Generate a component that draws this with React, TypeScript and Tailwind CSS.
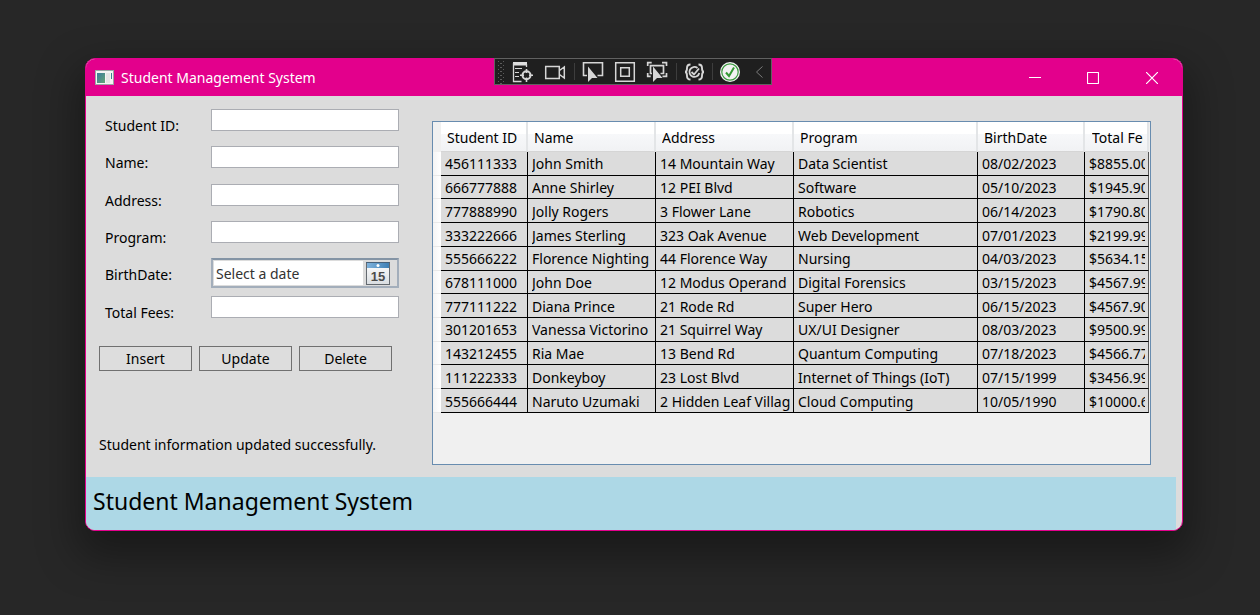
import React from "react";

const columns = ["Student ID", "Name", "Address", "Program", "BirthDate", "Total Fees"];

const students = [
  ["456111333", "John Smith", "14 Mountain Way", "Data Scientist", "08/02/2023", "$8855.00"],
  ["666777888", "Anne Shirley", "12 PEI Blvd", "Software", "05/10/2023", "$1945.90"],
  ["777888990", "Jolly Rogers", "3 Flower Lane", "Robotics", "06/14/2023", "$1790.80"],
  ["333222666", "James Sterling", "323 Oak Avenue", "Web Development", "07/01/2023", "$2199.99"],
  ["555666222", "Florence Nighting", "44 Florence Way", "Nursing", "04/03/2023", "$5634.15"],
  ["678111000", "John Doe", "12 Modus Operand", "Digital Forensics", "03/15/2023", "$4567.99"],
  ["777111222", "Diana Prince", "21 Rode Rd", "Super Hero", "06/15/2023", "$4567.90"],
  ["301201653", "Vanessa Victorino", "21 Squirrel Way", "UX/UI Designer", "08/03/2023", "$9500.99"],
  ["143212455", "Ria Mae", "13 Bend Rd", "Quantum Computing", "07/18/2023", "$4566.77"],
  ["111222333", "Donkeyboy", "23 Lost Blvd", "Internet of Things (IoT)", "07/15/1999", "$3456.99"],
  ["555666444", "Naruto Uzumaki", "2 Hidden Leaf Village", "Cloud Computing", "10/05/1990", "$10000.60"],
];

function DebugToolbar() {
  return (
    <div
      role="toolbar"
      aria-label="Debug tools"
      className="absolute top-0 left-[409px] flex h-[27px] w-[278px] items-center border border-[#616161] bg-[#1f1f1f]"
    >
      <svg width="276" height="25" viewBox="495 59 276 25" fill="none" stroke="#d6d6d6">
        <g fill="#5c5c5c" stroke="none">
          {[61, 65, 69, 73, 77, 81].map((y) => (
            <g key={y}>
              <rect x="498" y={y} width="1" height="1" />
              <rect x="503" y={y} width="1" height="1" />
              <rect x="500" y={y + 2} width="2" height="1" />
            </g>
          ))}
        </g>
        <path d="M513 62h14v3.500h-14z" fill="#dedede" stroke="none" />
        <path d="M513.500 63v18.500h8M526.500 64v3" strokeWidth="1.300" />
        <path d="M515 68.500h7M515 72.500h4M515 76.500h4" />
        <circle cx="526.500" cy="75.300" r="4" strokeWidth="2" />
        <path d="M526.500 69v4M526.500 77.500v4.500M520 75.300h4M529 75.300h4" strokeWidth="1.600" />
        <path d="M545.700 66.500h13.600v12h-13.600zM559.500 70.500l4.800-3.500v11l-4.800-3.500" strokeWidth="1.500" />
        <path d="M574.500 63v17M676.500 63v17M712.500 63v17" stroke="#3d3d3d" />
        <path d="M587 75.500h-3.500v-12.800h19v12.800h-5" strokeWidth="1.600" />
        <path d="M588 66.500v15.500l4-4h5.500z" fill="#d6d6d6" stroke="none" />
        <path d="M615.700 62.700h18.600v18.600h-18.600zM620.700 67.700h8.600v8.600h-8.600z" strokeWidth="1.500" />
        <path d="M647.700 66v-3.300h4M662 62.700h4.500v3.300M647.700 73v3.300h3M666.500 73v3.300h-4M652 73.500h-1.500v-7.800h13v7.800h-3" strokeWidth="1.700" />
        <path d="M653 66.500v15.500l4-4h5.500z" fill="#d6d6d6" stroke="none" />
        <path d="M690.500 64.500c-3 0-3.500 1.500-3.500 3.500s-.500 4-2 4c1.500 0 2 2 2 4s.500 3.500 3.500 3.500M698.500 64.500c3 0 3.500 1.500 3.500 3.500s.500 4 2 4c-1.500 0-2 2-2 4s-.500 3.500-3.500 3.500" strokeWidth="1.900" />
        <path d="M697.500 68a5 5 0 1 0 1.800 5M691.500 72l2.500 2.500 5-6" strokeWidth="1.800" />
        <circle cx="730" cy="72" r="10" fill="#f2f2f2" stroke="none" />
        <circle cx="730" cy="72" r="8.200" stroke="#3a9a3e" strokeWidth="1.200" />
        <path d="M726 72.500l3 3.500 5-8.500" stroke="#339933" strokeWidth="2" />
        <path d="M762.500 66.500l-6 5.500 6 5.500" stroke="#7a7a7a" />
      </svg>
    </div>
  );
}

function WindowIcon() {
  return (
    <svg width="19" height="16" viewBox="0 0 19 16">
      <defs>
        <linearGradient id="pane" x1="0" y1="0" x2="1" y2="1">
          <stop offset="0" stopColor="#3b7a9e" />
          <stop offset="1" stopColor="#63a574" />
        </linearGradient>
      </defs>
      <rect x="0.500" y="0.500" width="18" height="14" fill="#f4f4f4" stroke="#9aa7a5" />
      <rect x="2" y="3" width="8" height="10" fill="url(#pane)" />
      <rect x="11" y="3" width="4" height="10" fill="#e5e5e5" />
      <rect x="16" y="3" width="1" height="6" fill="#3b8290" />
    </svg>
  );
}

function CalendarIcon() {
  return (
    <svg width="24" height="23" viewBox="0 0 24 23">
      <defs>
        <linearGradient id="page" x1="0" y1="0" x2="0" y2="1">
          <stop offset="0" stopColor="#ffffff" />
          <stop offset="1" stopColor="#d9dde1" />
        </linearGradient>
        <linearGradient id="band" x1="0" y1="0" x2="1" y2="0">
          <stop offset="0" stopColor="#7fb2dc" />
          <stop offset="1" stopColor="#3f80b5" />
        </linearGradient>
      </defs>
      <rect x="0.500" y="0.500" width="23" height="22" fill="url(#page)" stroke="#646a70" />
      <rect x="1" y="1" width="22" height="5" fill="url(#band)" />
      <rect x="0" y="0" width="24" height="1" fill="#47617a" />
      <circle cx="12" cy="3.500" r="1.500" fill="#fff" />
      <text x="12" y="19" textAnchor="middle" fontSize="13" fontWeight="700" fill="#4b4b4b" fontFamily="Liberation Sans, sans-serif">
        15
      </text>
    </svg>
  );
}

function TextRow({ id, label }: { id: string; label: string }) {
  return (
    <>
      <label htmlFor={id} className="pt-[7px]">{label}</label>
      <input id={id} type="text" className="h-[22px] w-full border border-[#abadb3] bg-white px-1 outline-none" />
    </>
  );
}

export default function App() {
  return (
    <div className="min-h-screen bg-[#272727] pt-[58px] pr-[77px] pb-[84px] pl-[85px] font-['Noto_Sans',sans-serif] text-sm leading-5 text-black">
      <main className="relative rounded-[10px] shadow-[0_18px_40px_8px_rgba(0,0,0,0.35)]">
        <div className="overflow-hidden rounded-[10px] border border-[#e3008c] bg-[#dcdcdc]">
          <header className="flex h-[37px] items-center bg-[#e3008c] pl-[9px] text-white">
            <WindowIcon />
            <h1 className="ml-[7px]">Student Management System</h1>
            <div className="ml-auto flex h-full">
              <button aria-label="Minimize" className="flex w-[58px] items-center justify-center">
                <svg width="12" height="12" viewBox="0 0 12 12"><path d="M0 5.500h12" stroke="#fff" /></svg>
              </button>
              <button aria-label="Maximize" className="flex w-[58px] items-center justify-center">
                <svg width="12" height="12" viewBox="0 0 12 12"><rect x="0.500" y="0.500" width="11" height="11" rx="0.500" fill="none" stroke="#fff" strokeWidth="1.200" /></svg>
              </button>
              <button aria-label="Close" className="flex w-[60px] items-center justify-center">
                <svg width="12" height="12" viewBox="0 0 12 12"><path d="M0 0l12 12M12 0L0 12" stroke="#fff" strokeWidth="1.200" /></svg>
              </button>
            </div>
          </header>

          <div className="flex h-[381px]">
            <form className="w-[346px] shrink-0 pt-[13px]" onSubmit={(e) => e.preventDefault()}>
              <div className="grid h-[224px] grid-cols-[106px_188px] grid-rows-6 items-start pl-[19px]">
                <TextRow id="student-id" label="Student ID:" />
                <TextRow id="name" label="Name:" />
                <TextRow id="address" label="Address:" />
                <TextRow id="program" label="Program:" />
                <label htmlFor="birth-date" className="pt-[7px]">BirthDate:</label>
                <div className="flex h-[30px] items-center justify-between border-2 border-[#a3aebb] border-t-[#8494a5] pr-[7px] pl-px">
                  <input
                    id="birth-date"
                    type="text"
                    placeholder="Select a date"
                    className="h-6 w-[149px] bg-white px-0.5 outline-none placeholder:text-[#333333] placeholder:opacity-100"
                  />
                  <button type="button" aria-label="Show calendar"><CalendarIcon /></button>
                </div>
                <TextRow id="total-fees" label="Total Fees:" />
              </div>
              <div className="mt-[13px] flex gap-[7px] pl-[13px]">
                {["Insert", "Update", "Delete"].map((label) => (
                  <button key={label} type="button" className="h-[25px] w-[93px] border border-[#707070] bg-[#dddddd] pt-px">
                    {label}
                  </button>
                ))}
              </div>
              <p role="status" className="mt-16 pl-[13px]">Student information updated successfully.</p>
            </form>

            <div className="mt-[25px] mr-[31px] mb-3 min-w-0 flex-1 overflow-hidden border border-[#688caf] bg-[#f0f0f0] pr-px">
              <table className="h-[291px] w-full table-fixed border-separate border-spacing-0">
                <colgroup>
                  <col className="w-2" />
                  <col className="w-[87px]" />
                  <col className="w-[128px]" />
                  <col className="w-[138px]" />
                  <col className="w-[184px]" />
                  <col className="w-[107px]" />
                  <col />
                </colgroup>
                <thead>
                  <tr className="h-[30px]">
                    <td className="bg-[#f0f0f0] p-0" />
                    {columns.map((name) => (
                      <th
                        key={name}
                        scope="col"
                        className="border-r-2 border-b border-r-[#e3e5e7] border-b-[#d5d5d5] bg-linear-to-b from-white from-40% via-[#f7f8fa] via-42% to-[#f1f2f4] pt-0.5 pr-1 pb-0 pl-1.5 text-left font-normal last:pl-[7px]"
                      >
                        <div className="overflow-hidden whitespace-nowrap">{name}</div>
                      </th>
                    ))}
                  </tr>
                </thead>
                <tbody>
                  {students.map((row) => (
                    <tr key={row[0]}>
                      <td className="border-b border-[#e8e8e8] bg-linear-to-r from-[#f4f4f4] to-white p-0" />
                      {row.map((value, i) => (
                        <td key={i} className="border-r border-b border-black bg-[#dcdcdc] pt-0.5 pr-[3px] pb-0 pl-1 last:border-r-[#555555]">
                          <div className="overflow-hidden whitespace-nowrap">{value}</div>
                        </td>
                      ))}
                    </tr>
                  ))}
                </tbody>
              </table>
            </div>
          </div>

          <footer className="mr-1.5 h-[53px] bg-[#add8e6] pl-[7px] text-[23px] leading-[48px]">Student Management System</footer>
        </div>
        <DebugToolbar />
      </main>
    </div>
  );
}
